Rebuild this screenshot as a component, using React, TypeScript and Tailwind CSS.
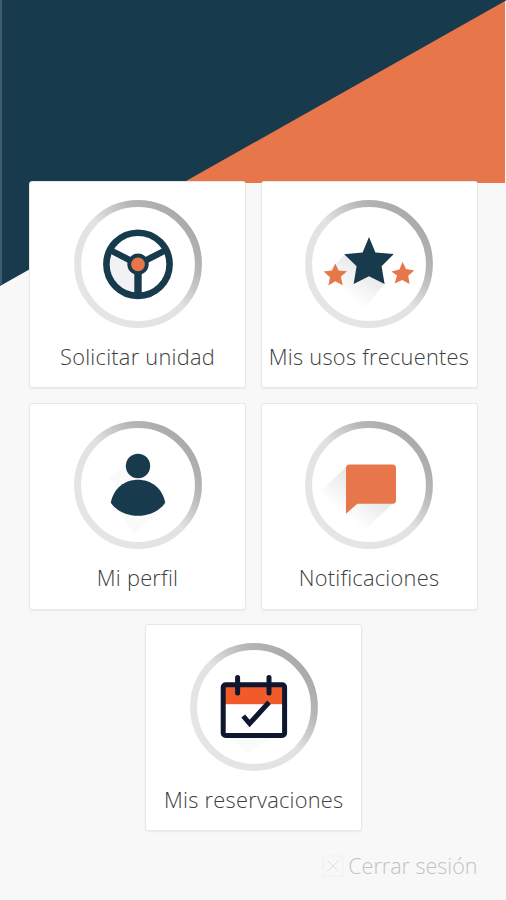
import React from 'react';

const NAVY = '#183A4D';
const ORANGE = '#E8764B';

const Ring: React.FC<{ id: string; children: React.ReactNode }> = ({ id, children }) => (
  <svg viewBox="0 0 128 128" className="w-32 h-32 shrink-0">
    <defs>
      <linearGradient id={`${id}-ring`} x1="1" y1="0.1" x2="0.1" y2="1">
        <stop offset="0.1" stopColor="#ABABAB" />
        <stop offset="0.26" stopColor="#B6B6B6" />
        <stop offset="0.5" stopColor="#E2E2E2" />
        <stop offset="1" stopColor="#E6E6E6" />
      </linearGradient>
      <linearGradient id={`${id}-shade`} gradientUnits="userSpaceOnUse" x1="66" y1="60" x2="40" y2="94">
        <stop offset="0" stopColor="#E2E2E2" />
        <stop offset="1" stopColor="#FFFFFF" />
      </linearGradient>
    </defs>
    <circle cx="64" cy="64" r="60.4" fill="#FFFFFF" stroke={`url(#${id}-ring)`} strokeWidth="7" />
    {children}
  </svg>
);

const WheelIcon = () => (
  <Ring id="wheel">
    <path d="M36 56L64 64V97C48 97 32 82 36 56Z" fill="#F1F2F3" />
    <g fill="none" stroke={NAVY}>
      <circle cx="64" cy="64.3" r="31.6" strokeWidth="6.6" />
      <path d="M64 64.3L37 50.5M64 64.3L91 50.5" strokeWidth="6.4" />
      <path d="M64 64.3V95" strokeWidth="7.4" />
    </g>
    <circle cx="64" cy="64.3" r="8.8" fill={ORANGE} stroke={NAVY} strokeWidth="3.8" />
  </Ring>
);

const StarsIcon = () => (
  <Ring id="stars">
    <path d="M39.6 54.7L17 77L54 115L79.3 84L64 60Z" fill="url(#stars-shade)" />
    <path
      d="M64 37L70.4 52.4L88.8 54L76.6 66.3L79.6 84L64 76.2L48.6 84L51.6 66.3L39.2 54.3L57.6 52.4Z"
      fill={NAVY}
    />
    <path
      d="M30.3 63.5L33.6 70.6L42 71.3L35.8 76.8L37.8 85.3L30.3 81.3L23.4 85.5L25 77.2L18.6 71.6L27 70.6Z"
      fill={ORANGE}
    />
    <path
      d="M97.6 61.8L100.9 69L109.2 70.4L103.2 75.8L104.6 83.9L97.2 80L89.6 83.6L92 75.6L86.4 71.4L94.4 69.4Z"
      fill={ORANGE}
    />
  </Ring>
);

const ProfileIcon = () => (
  <Ring id="profile">
    <path d="M54 42L35 57L45 66L58 60Z" fill="#FAFAFA" />
    <path d="M45 90L60 113L85 90Z" fill="#FAFAFA" />
    <circle cx="64" cy="45" r="12.2" fill={NAVY} />
    <path
      d="M64 58.8C77 58.8 88.5 67 91.2 81.8C86 89.5 76 94.8 64 94.8C52 94.8 42 89.5 36.8 81.8C39.5 67 51 58.8 64 58.8Z"
      fill={NAVY}
    />
  </Ring>
);

const MessageIcon = () => (
  <Ring id="message">
    <path d="M41 46L15 71L57 112L88 82Z" fill="url(#message-shade)" />
    <path
      d="M44.5 43.5H87.5Q91 43.5 91 47V79.3Q91 82.8 87.5 82.8H52.3L41 92.8V47Q41 43.5 44.5 43.5Z"
      fill={ORANGE}
    />
  </Ring>
);

const CalendarIcon = () => (
  <Ring id="calendar">
    <path d="M40 94L57 110L82 94Z" fill="#FAFAFA" />
    <rect x="33.3" y="41.8" width="61.2" height="50.6" fill="#FFFFFF" />
    <rect x="33.3" y="41.8" width="61.2" height="19.4" fill="#F15A29" />
    <g fill="none" stroke="#0E1630" strokeWidth="5">
      <rect x="33.2" y="41.8" width="61.4" height="50.6" rx="2.5" />
      <path d="M47.6 34.6V50M79 34.6V50" strokeLinecap="round" />
      <path d="M53.2 73L59.6 80.5L79 59.2" />
    </g>
  </Ring>
);

const Card: React.FC<{ label: string; children: React.ReactNode }> = ({ label, children }) => (
  <button className="w-[217px] h-[207px] pt-[17.4px] flex flex-col items-center bg-white border border-[#E8E8E8] rounded-[3px] shadow-[0_1px_2px_rgba(0,0,0,0.06)]">
    {children}
    <span className="mt-[14px] text-[21.8px] leading-[30px] font-light text-[#404040] tracking-[0.25px] whitespace-nowrap">
      {label}
    </span>
  </button>
);

export default function App() {
  return (
    <div className="relative w-full h-[900px] overflow-hidden bg-[#F8F8F8] font-['Open_Sans',sans-serif]">
      {/* Diagonal header backdrop */}
      <svg viewBox="0 0 506 290" className="absolute top-0 left-0 w-[506px] h-[290px]">
        <rect width="505" height="183" fill={ORANGE} />
        <path d="M0 0H506V0.5L0 286Z" fill={NAVY} />
        <path d="M0 0H2V284L0 285Z" fill="#405A70" />
      </svg>

      <main className="relative pt-[181.4px] pl-[29px] pr-[28.5px] flex flex-col gap-[14.4px]">
        <div className="flex justify-between">
          <Card label="Solicitar unidad"><WheelIcon /></Card>
          <Card label="Mis usos frecuentes"><StarsIcon /></Card>
        </div>
        <div className="flex justify-between">
          <Card label="Mi perfil"><ProfileIcon /></Card>
          <Card label="Notificaciones"><MessageIcon /></Card>
        </div>
        <div className="flex justify-center pl-px">
          <Card label="Mis reservaciones"><CalendarIcon /></Card>
        </div>
        <div className="mt-[5px] flex justify-end items-center gap-1 text-[#C2C2C2]">
          <svg viewBox="0 0 22 22" className="w-[22px] h-[22px]" fill="none">
            <rect x="1" y="1" width="20" height="20" stroke="#F0F0F0" />
            <path d="M5 5L17 17M17 5L5 17" stroke="#E2E2E2" />
          </svg>
          <span className="text-[21.5px] leading-[30px] font-light">Cerrar sesión</span>
        </div>
      </main>
    </div>
  );
}
